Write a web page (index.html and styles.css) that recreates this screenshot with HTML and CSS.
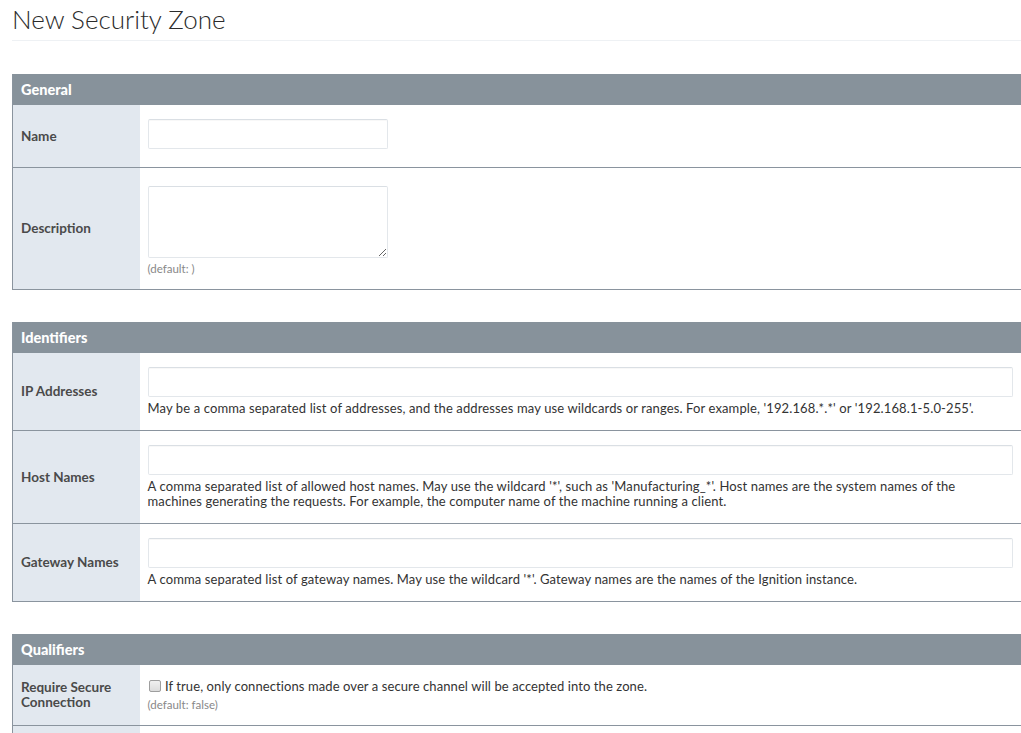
FILE: index.html
```html
<!DOCTYPE html>
<html lang="en">
<head>
<meta charset="utf-8">
<title>New Security Zone</title>
<link rel="stylesheet" href="styles.css">
</head>
<body>
<div class="page">
  <h1 class="page-title">New Security Zone</h1>

  <table class="form-table">
    <colgroup><col class="col-label"><col class="col-field"></colgroup>
    <tr class="section"><th colspan="2">General</th></tr>
    <tr>
      <td class="label">Name</td>
      <td class="field"><input type="text" class="text-input short"></td>
    </tr>
    <tr>
      <td class="label">Description</td>
      <td class="field">
        <textarea class="text-area"></textarea>
        <div class="default">(default: )</div>
      </td>
    </tr>
  </table>

  <table class="form-table">
    <colgroup><col class="col-label"><col class="col-field"></colgroup>
    <tr class="section"><th colspan="2">Identifiers</th></tr>
    <tr>
      <td class="label">IP Addresses</td>
      <td class="field">
        <input type="text" class="text-input wide">
        <div class="help">May be a comma separated list of addresses, and the addresses may use wildcards or ranges. For example, '192.168.*.*' or '192.168.1-5.0-255'.</div>
      </td>
    </tr>
    <tr>
      <td class="label">Host Names</td>
      <td class="field">
        <input type="text" class="text-input wide">
        <div class="help">A comma separated list of allowed host names. May use the wildcard '*', such as 'Manufacturing_*'. Host names are the system names of the machines generating the requests. For example, the computer name of the machine running a client.</div>
      </td>
    </tr>
    <tr>
      <td class="label">Gateway Names</td>
      <td class="field">
        <input type="text" class="text-input wide">
        <div class="help">A comma separated list of gateway names. May use the wildcard '*'. Gateway names are the names of the Ignition instance.</div>
      </td>
    </tr>
  </table>

  <table class="form-table">
    <colgroup><col class="col-label"><col class="col-field"></colgroup>
    <tr class="section"><th colspan="2">Qualifiers</th></tr>
    <tr>
      <td class="label">Require Secure Connection</td>
      <td class="field">
        <label class="check-line"><input type="checkbox" class="check"> If true, only connections made over a secure channel will be accepted into the zone.</label>
        <div class="default">(default: false)</div>
      </td>
    </tr>
    <tr class="next-row">
      <td class="label"></td>
      <td class="field"></td>
    </tr>
  </table>
</div>
</body>
</html>
```
FILE: styles.css
```css
html, body {
  margin: 0;
  padding: 0;
  background: #ffffff;
}

body {
  font-family: Lato, "Open Sans", "Liberation Sans", sans-serif;
  font-size: 13px;
  color: #333333;
  overflow: hidden;
}

.page {
  padding: 0 0 40px 12px;
}

.page-title {
  margin: 0;
  padding: 4px 0 0 0;
  height: 36px;
  font-size: 26px;
  font-weight: 300;
  line-height: 31px;
  color: #2b2b2b;
  border-bottom: 1px solid #eef1f4;
  margin-bottom: 33px;
}

.form-table {
  border-collapse: collapse;
  width: calc(100% + 1px);
  table-layout: fixed;
  margin-bottom: 32px;
  border: 1px solid #8a949e;
  border-top: none;
}

.col-label {
  width: 127px;
}

.form-table th {
  background: #87929b;
  color: #ffffff;
  text-align: left;
  font-weight: 900;
  font-size: 14.5px;
  height: 31px;
  padding: 0 8px;
  line-height: 31px;
}

.form-table td {
  border-bottom: 1px solid #8a949e;
}

.label {
  background: #e2e8ef;
  padding: 0 8px;
  font-weight: 700;
  font-size: 13.5px;
  color: #4a4a4a;
  line-height: 15px;
  vertical-align: middle;
}

.field {
  padding: 14px 8px 14px 8px;
  vertical-align: top;
}

.next-row .label,
.next-row .field {
  height: 30px;
  border-bottom: none;
}

.text-input {
  display: block;
  box-sizing: border-box;
  height: 30px;
  margin: 0 0 4px 0;
  border: 1px solid #e3e7eb;
  border-top-color: #dadfe4;
  border-radius: 2px;
  background: #ffffff;
  box-shadow: inset 0 1px 1px rgba(0, 0, 0, 0.03);
  font: inherit;
}

.text-input.short {
  width: 240px;
}

.text-input.wide {
  width: 100%;
}

.text-area {
  display: block;
  box-sizing: border-box;
  width: 240px;
  height: 72px;
  margin: 4px 0 4px 0;
  border: 1px solid #e3e7eb;
  border-top-color: #dadfe4;
  border-radius: 2px;
  font: inherit;
  resize: vertical;
}

.help {
  line-height: 15px;
  color: #333333;
  letter-spacing: 0.12px;
}

.default {
  font-size: 11.5px;
  line-height: 13px;
  color: #888888;
}

.check-line {
  display: block;
  line-height: 15px;
  margin-bottom: 4px;
  letter-spacing: 0.09px;
}

.check {
  appearance: none;
  -webkit-appearance: none;
  box-sizing: border-box;
  width: 12px;
  height: 12px;
  margin: 0 1px 0 1px;
  vertical-align: -1px;
  border: 1px solid #9e9e9e;
  border-radius: 2px;
  background: linear-gradient(#f0f0f0, #dcdcdc);
}
```
